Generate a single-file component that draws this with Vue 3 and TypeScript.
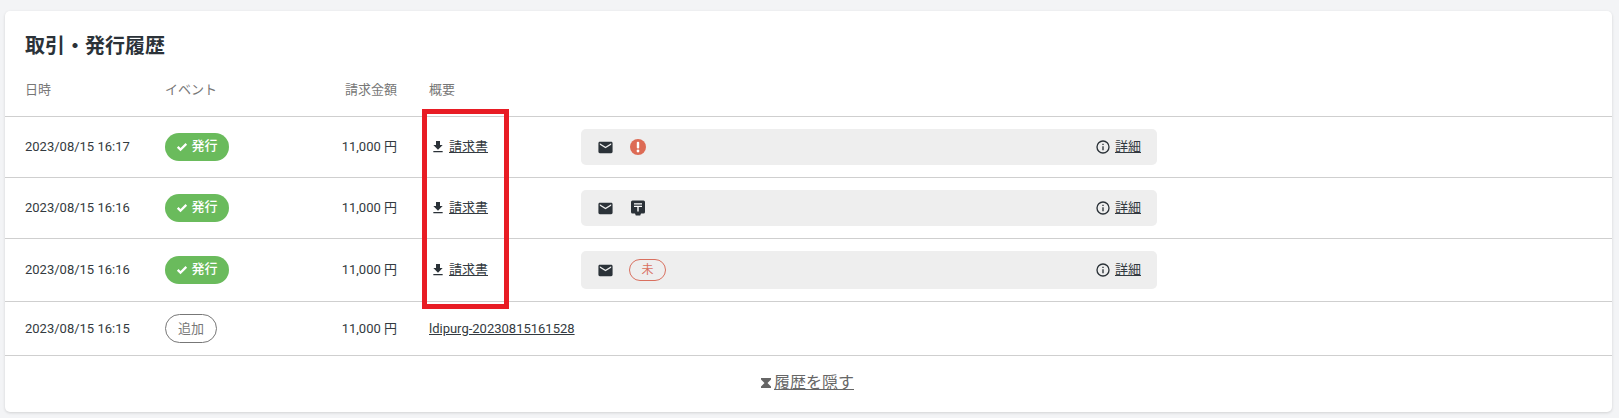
<template>
  <div class="page">
    <section class="card">
      <h2 class="card__title">取引・発行履歴</h2>

      <div class="row row--head">
        <span>日時</span>
        <span>イベント</span>
        <span class="amount">請求金額</span>
        <span class="summary">概要</span>
      </div>

      <div v-for="item in issued" :key="item.id" class="row">
        <span>{{ item.date }}</span>
        <span class="pill pill--ok">
          <svg class="pill__check" viewBox="0 0 24 24"><path d="M9 20.500 1.800 13.300l3.200-3.200 4 4L19 4.100l3.200 3.200z" /></svg>
          <span class="pill__label">発行</span>
        </span>
        <span class="amount">11,000 円</span>
        <a class="summary link link--icon">
          <svg class="icon-dl" viewBox="0 0 24 24"><path d="M19 9h-4V3H9v6H5l7 7 7-7zM5 18v2h14v-2H5z" /></svg>
          <span class="link__text">請求書</span>
        </a>
        <div class="panel">
          <svg class="icon-mail" viewBox="0 0 24 24"><path d="M20 4H4c-1.100 0-2 .9-2 2v12c0 1.100.9 2 2 2h16c1.100 0 2-.9 2-2V6c0-1.100-.9-2-2-2zm0 4-8 5-8-5V6l8 5 8-5v2z" /></svg>
          <svg v-if="item.status === 'error'" class="icon-status" viewBox="0 0 20 20">
            <circle cx="10" cy="10" r="8" fill="#dd6b55" />
            <rect x="8.800" y="4.800" width="2.400" height="6.800" rx="1" fill="#fff" />
            <circle cx="10" cy="14" r="1.400" fill="#fff" />
          </svg>
          <svg v-else-if="item.status === 'post'" class="icon-status" viewBox="0 0 20 20">
            <path d="M4.500 2.500h11A1.500 1.500 0 0 1 17 4v10a1.500 1.500 0 0 1-1.500 1.500H13l-.8 2H7.800l-.8-2H4.500A1.500 1.500 0 0 1 3 14V4a1.500 1.500 0 0 1 1.500-1.500z" fill="#2b3238" />
            <path d="M6 5.200h8v1.300H6zM6 7.800h8v1.300h-3.300v4.400H9.300V9.100H6z" fill="#fff" />
          </svg>
          <span v-else class="pill-unread">未</span>
          <span class="panel__detail">
            <svg class="icon-info" viewBox="0 0 24 24"><path d="M11 7h2v2h-2zm0 4h2v6h-2zm1-9a10 10 0 1 0 0 20 10 10 0 0 0 0-20zm0 18a8 8 0 1 1 0-16 8 8 0 0 1 0 16z" /></svg>
            <a class="link__text">詳細</a>
          </span>
        </div>
      </div>

      <div class="row">
        <span>2023/08/15 16:15</span>
        <span class="pill pill--outline">追加</span>
        <span class="amount">11,000 円</span>
        <a class="summary link__text nowrap">ldipurg-20230815161528</a>
      </div>

      <div class="card__footer">
        <svg class="icon-hide" viewBox="0 0 24 24"><path d="M2 2h20v3l-7 7 7 7v3H2v-3l7-7-7-7z" /></svg>
        <a class="link__text">履歴を隠す</a>
      </div>

      <div class="highlight"></div>
    </section>
  </div>
</template>

<script setup lang="ts">
interface Issued {
  id: number
  date: string
  status: 'error' | 'post' | 'unread'
}

const issued: Issued[] = [
  { id: 1, date: '2023/08/15 16:17', status: 'error' },
  { id: 2, date: '2023/08/15 16:16', status: 'post' },
  { id: 3, date: '2023/08/15 16:16', status: 'unread' }
]
</script>

<style>
html,
body {
  background: #f3f4f6;
}
</style>

<style scoped>
.page {
  padding: 11px 7px 6px 5px;
  font-family: Roboto, "Noto Sans CJK JP", sans-serif;
  font-size: 13px;
  line-height: 18px;
  color: #333a40;
}

.card {
  position: relative;
  background: #fff;
  border-radius: 5px;
  box-shadow: 0 1px 3px rgba(0, 0, 0, 0.14);
}

.card__title {
  margin: 0;
  padding: 21px 20px 0;
  font-size: 20px;
  line-height: 28px;
  font-weight: 700;
  color: #2b3238;
}

.row {
  display: grid;
  grid-template-columns: 140px 100px 132px 184px 576px;
  align-items: center;
  padding: 12px 20px;
  border-bottom: 1px solid #cfcfcf;
}

.row--head {
  padding: 21px 20px 17px;
  color: #777;
}

.amount {
  text-align: right;
}

.summary {
  margin-left: 32px;
}

.nowrap {
  white-space: nowrap;
}

.pill {
  display: inline-flex;
  align-items: center;
  justify-content: center;
  justify-self: start;
  border-radius: 15px;
  box-sizing: border-box;
}

.pill--ok {
  width: 64px;
  height: 28px;
  gap: 3px;
  background: #6abb5c;
  color: #fff;
  font-weight: 500;
}

.pill__label {
  position: relative;
  top: -1px;
}

.pill__check {
  width: 12px;
  height: 12px;
  fill: #fff;
}

.pill--outline {
  width: 52px;
  height: 29px;
  border: 1px solid #777;
  color: #777;
}

.link--icon {
  display: inline-flex;
  align-items: center;
  gap: 3px;
  padding-left: 1px;
}

.link__text {
  color: #333a40;
  text-decoration: underline;
  cursor: pointer;
}

.icon-dl {
  width: 16px;
  height: 16px;
  fill: #2b3238;
}

.panel {
  display: flex;
  align-items: center;
  gap: 14px;
  padding: 8px 16px;
  background: #eee;
  border-radius: 5px;
}

.icon-mail {
  width: 17px;
  height: 17px;
  fill: #2b3238;
}

.icon-status {
  width: 20px;
  height: 20px;
  display: block;
}

.pill-unread {
  display: flex;
  align-items: center;
  justify-content: center;
  width: 37px;
  height: 22px;
  margin-left: 1px;
  box-sizing: border-box;
  border: 1px solid #d9705f;
  border-radius: 12px;
  font-size: 12px;
  color: #d9705f;
}

.panel__detail {
  display: inline-flex;
  align-items: center;
  gap: 4px;
  margin-left: auto;
}

.icon-info {
  width: 16px;
  height: 16px;
  fill: #2b3238;
}

.card__footer {
  display: flex;
  align-items: center;
  justify-content: center;
  gap: 2px;
  height: 56px;
  padding: 0 3px 3px 0;
  box-sizing: border-box;
  font-size: 16px;
}

.card__footer .link__text {
  color: #666;
}

.icon-hide {
  width: 12px;
  height: 12px;
  fill: #666;
}

/* annotation drawn on top of the screenshot */
.highlight {
  position: absolute;
  left: 417px;
  top: 98px;
  width: 77px;
  height: 190px;
  border: 5px solid #e81c24;
  pointer-events: none;
}
</style>
